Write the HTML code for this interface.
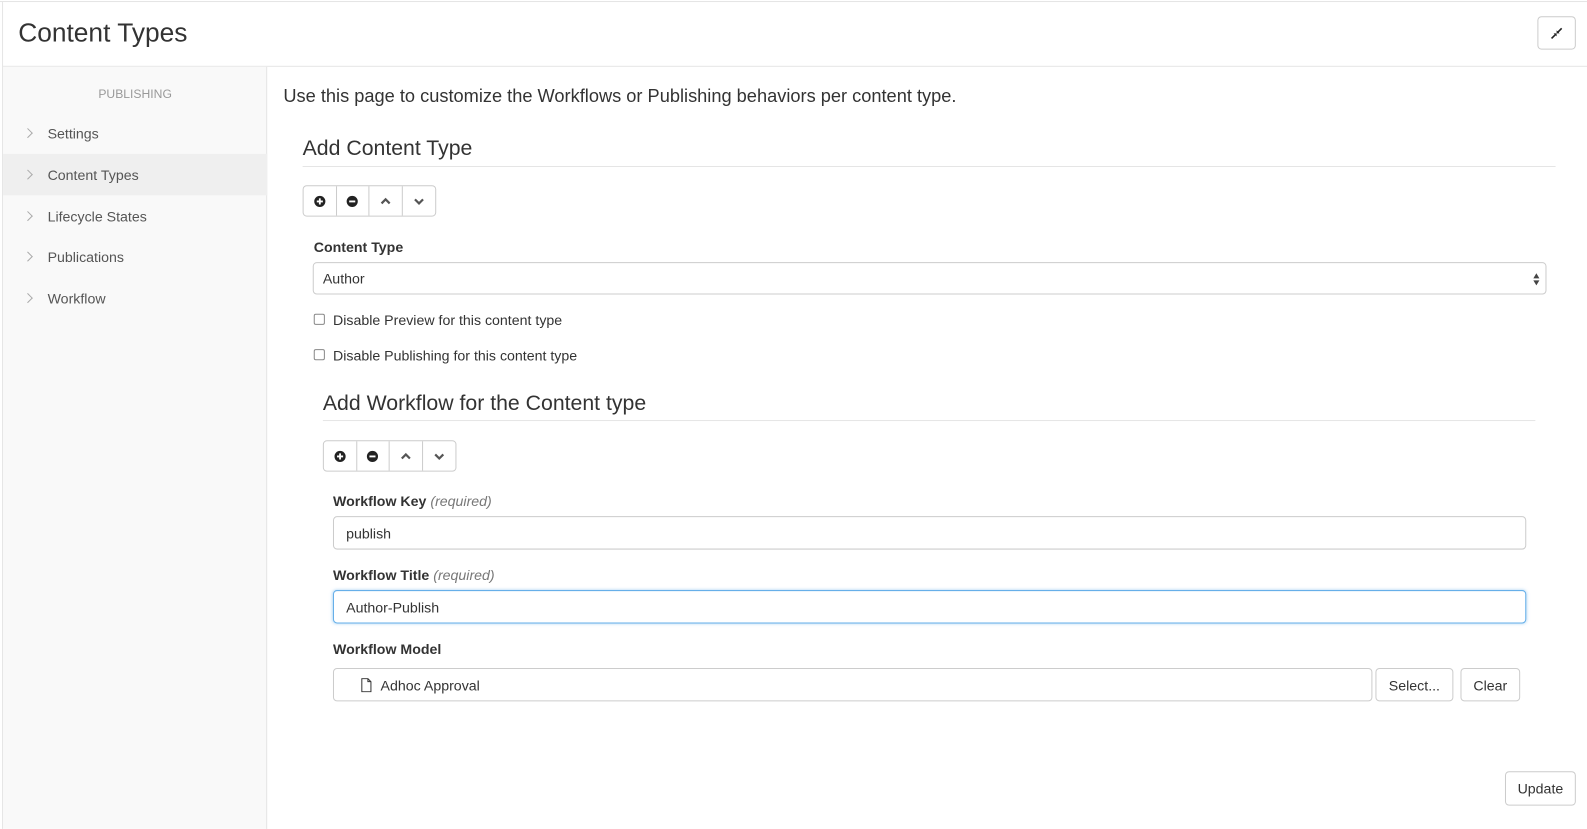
<!DOCTYPE html>
<html><head><style>
*{box-sizing:border-box;margin:0;padding:0}
body{width:1587px;height:819px;background:#fff;font-family:"Liberation Sans",sans-serif;color:#333;position:relative;overflow:hidden}
#w{position:absolute;left:0;top:0;width:1568px;height:810px;transform:scale(1.0121);transform-origin:0 0}
.a{position:absolute}
.btn{position:absolute;border:1px solid #ccc;border-radius:4px;background:#fff;font-size:14px;color:#333;display:flex;align-items:center;justify-content:center}
.inp{position:absolute;border:1px solid #ccc;border-radius:4px;background:#fff;font-size:14px;color:#333;padding-left:12px;display:flex;align-items:center}
.lbl{position:absolute;font-size:14px;font-weight:bold;color:#333}
.lbl i{font-weight:normal;color:#777}
.grp{position:absolute;display:flex;border:1px solid #ccc;border-radius:4px;height:31px}
.grp div{width:33px;border-right:1px solid #ccc;display:flex;align-items:center;justify-content:center}
.grp div:last-child{border-right:none}
.nav{position:absolute;left:3px;width:261px;height:41px;font-size:14px;color:#555;display:flex;align-items:center;padding-left:44px}
.nav:before{content:"";position:absolute;left:21px;top:17px;width:6px;height:6px;border-right:1px solid #aaa;border-top:1px solid #aaa;transform:rotate(45deg)}
</style></head><body><div id="w">
<div class="a" style="left:0;top:1px;width:1568px;height:1px;background:#e5e5e5"></div>
<div class="a" style="left:2px;top:1px;width:1px;height:818px;background:#e5e5e5"></div>
<div class="a" style="left:18px;top:17px;font-size:26px;color:#333">Content Types</div>
<div class="btn" style="left:1519px;top:16px;width:38px;height:33px"><svg width="14" height="14" viewBox="0 0 14 14"><path d="M2 12L6 8M12 2L8 6" stroke="#222" stroke-width="1.6"/><path d="M4 7L7 7 7 10Z M10 7L7 7 7 4Z" fill="#222"/></svg></div>
<div class="a" style="left:3px;top:65px;width:1565px;height:1px;background:#e5e5e5"></div>
<div class="a" style="left:3px;top:66px;width:261px;height:753px;background:#f9f9f9;border-right:1px solid #e5e5e5"></div>
<div class="a" style="left:3px;top:86px;width:261px;text-align:center;font-size:12px;color:#999">PUBLISHING</div>
<div class="nav" style="top:111px">Settings</div>
<div class="nav" style="top:152px;background:#efefef">Content Types</div>
<div class="nav" style="top:193px">Lifecycle States</div>
<div class="nav" style="top:233px">Publications</div>
<div class="nav" style="top:274px">Workflow</div>
<div class="a" style="left:280px;top:85px;font-size:18px;color:#333">Use this page to customize the Workflows or Publishing behaviors per content type.</div>
<div class="a" style="left:299px;top:135px;font-size:21px;color:#333">Add Content Type</div>
<div class="a" style="left:299px;top:164px;width:1238px;height:1px;background:#e5e5e5"></div>
<div class="grp" style="left:299px;top:183px;width:132px">
<div><svg width="12" height="12"><circle cx="6" cy="6" r="5.5" fill="#222"/><path d="M3 6H9M6 3V9" stroke="#fff" stroke-width="1.8"/></svg></div>
<div><svg width="12" height="12"><circle cx="6" cy="6" r="5.5" fill="#222"/><path d="M3 6H9" stroke="#fff" stroke-width="1.8"/></svg></div>
<div><svg width="12" height="10"><path d="M2 7L6 3 10 7" stroke="#555" stroke-width="2.2" fill="none"/></svg></div>
<div><svg width="12" height="10"><path d="M2 3L6 7 10 3" stroke="#555" stroke-width="2.2" fill="none"/></svg></div>
</div>
<div class="lbl" style="left:310px;top:236px">Content Type</div>
<div class="inp" style="left:309px;top:259px;width:1219px;height:32px;padding-left:9px">Author<svg class="a" style="right:5px;top:9px" width="8" height="14"><path d="M4 1L7 6H1Z M4 13L7 8H1Z" fill="#444"/></svg></div>
<div class="a" style="left:310px;top:310px;width:11px;height:11px;border:1px solid #888;border-radius:2px"></div>
<div class="a" style="left:329px;top:308px;font-size:14px">Disable Preview for this content type</div>
<div class="a" style="left:310px;top:345px;width:11px;height:11px;border:1px solid #888;border-radius:2px"></div>
<div class="a" style="left:329px;top:343px;font-size:14px">Disable Publishing for this content type</div>
<div class="a" style="left:319px;top:387px;font-size:21px;color:#333">Add Workflow for the Content type</div>
<div class="a" style="left:319px;top:415px;width:1198px;height:1px;background:#e5e5e5"></div>
<div class="grp" style="left:319px;top:435px;width:132px">
<div><svg width="12" height="12"><circle cx="6" cy="6" r="5.5" fill="#222"/><path d="M3 6H9M6 3V9" stroke="#fff" stroke-width="1.8"/></svg></div>
<div><svg width="12" height="12"><circle cx="6" cy="6" r="5.5" fill="#222"/><path d="M3 6H9" stroke="#fff" stroke-width="1.8"/></svg></div>
<div><svg width="12" height="10"><path d="M2 7L6 3 10 7" stroke="#555" stroke-width="2.2" fill="none"/></svg></div>
<div><svg width="12" height="10"><path d="M2 3L6 7 10 3" stroke="#555" stroke-width="2.2" fill="none"/></svg></div>
</div>
<div class="lbl" style="left:329px;top:487px">Workflow Key <i>(required)</i></div>
<div class="inp" style="left:329px;top:510px;width:1179px;height:33px">publish</div>
<div class="lbl" style="left:329px;top:560px">Workflow Title <i>(required)</i></div>
<div class="inp" style="left:329px;top:583px;width:1179px;height:33px;border-color:#66afe9;box-shadow:0 0 3px rgba(102,175,233,.6)">Author-Publish</div>
<div class="lbl" style="left:329px;top:633px">Workflow Model</div>
<div class="inp" style="left:329px;top:660px;width:1027px;height:33px;padding-left:26px"><svg width="12" height="14" style="margin-right:8px"><path d="M1.5 .5H7.5L10.5 3.5V13.5H1.5Z M7.5 .5V3.5H10.5" stroke="#333" fill="none"/></svg>Adhoc Approval</div>
<div class="btn" style="left:1359px;top:660px;width:77px;height:33px">Select...</div>
<div class="btn" style="left:1443px;top:660px;width:59px;height:33px">Clear</div>
<div class="btn" style="left:1487px;top:762px;width:70px;height:34px">Update</div>
</div></body></html>
